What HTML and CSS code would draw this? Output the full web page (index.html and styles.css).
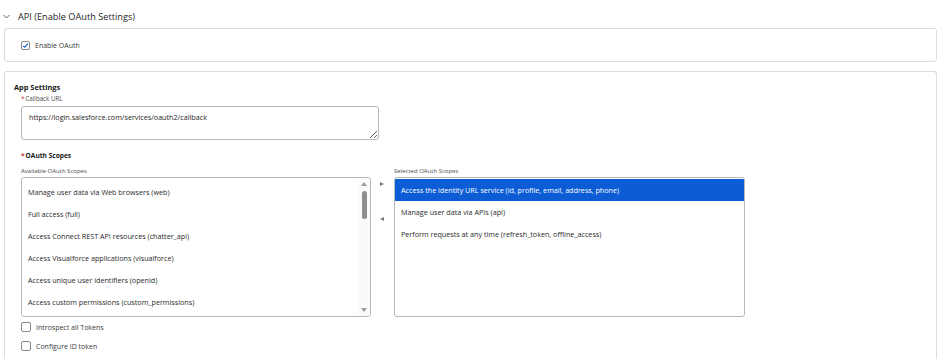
FILE: index.html
```html
<!DOCTYPE html>
<html lang="en">
<head>
    <meta charset="UTF-8">
    <title>API (Enable OAuth Settings)</title>
    <link rel="stylesheet" href="styles.css">
</head>
<body>
    <div class="section-header">
        <svg class="chevron" width="7" height="5" viewBox="0 0 7 5"><path d="M0.5 1 L3.5 4 L6.5 1" fill="none" stroke="#555" stroke-width="0.9"/></svg>
        <span>API (Enable OAuth Settings)</span>
    </div>

    <div class="card card-oauth">
        <label class="check">
            <span class="box checked">
                <svg width="7" height="7" viewBox="0 0 7 7"><path d="M1.2 3.8 L2.8 5.2 L5.8 1.6" fill="none" stroke="#0b5cd5" stroke-width="1.1"/></svg>
            </span>
            Enable OAuth
        </label>
    </div>

    <div class="card card-app">
        <h3>App Settings</h3>
        <div class="field-label"><span class="req">*</span>Callback URL</div>
        <textarea class="callback">https://login.salesforce.com/services/oauth2/callback</textarea>

        <h4><span class="req">*</span>OAuth Scopes</h4>
        <div class="dual">
            <div class="list-col">
                <div class="list-label">Available OAuth Scopes</div>
                <div class="listbox">
                    <ul class="options">
                        <li>Manage user data via Web browsers (web)</li>
                        <li>Full access (full)</li>
                        <li>Access Connect REST API resources (chatter_api)</li>
                        <li>Access Visualforce applications (visualforce)</li>
                        <li>Access unique user identifiers (openid)</li>
                        <li>Access custom permissions (custom_permissions)</li>
                    </ul>
                    <div class="scrollbar">
                        <span class="tri up"></span>
                        <span class="thumb"></span>
                        <span class="tri down"></span>
                    </div>
                </div>
            </div>
            <div class="movers">
                <span class="tri right"></span>
                <span class="tri left"></span>
            </div>
            <div class="list-col right-col">
                <div class="list-label">Selected OAuth Scopes</div>
                <div class="listbox">
                    <ul class="options">
                        <li class="selected">Access the identity URL service (id, profile, email, address, phone)</li>
                        <li>Manage user data via APIs (api)</li>
                        <li>Perform requests at any time (refresh_token, offline_access)</li>
                    </ul>
                </div>
            </div>
        </div>

        <label class="check row">
            <span class="box"></span>
            Introspect all Tokens
        </label>
        <label class="check row">
            <span class="box"></span>
            Configure ID token
        </label>
    </div>
</body>
</html>
```

FILE: styles.css
```css
* {
    margin: 0;
    padding: 0;
    box-sizing: border-box;
    font-family: "Open Sans", "Noto Sans", sans-serif;
}
body {
    width: 940px;
    height: 359px;
    overflow: hidden;
    background: #fff;
    color: #2b2b2b;
}
.section-header {
    height: 28px;
    display: flex;
    align-items: center;
    padding: 4px 0 0 3px;
    font-size: 9.2px;
    color: #1e1e1e;
}
.chevron {
    margin-right: 8px;
}
.card {
    margin: 0 3px 0 4px;
    border: 1px solid #dcdcdc;
    border-radius: 3px;
}
.card-oauth {
    height: 34px;
    display: flex;
    align-items: center;
    padding-left: 16px;
}
.check {
    display: flex;
    align-items: center;
    font-size: 7px;
    color: #3a3a3a;
}
.box {
    width: 9px;
    height: 9px;
    border: 1px solid #8a8a8a;
    border-radius: 2px;
    margin-right: 5px;
    display: flex;
    align-items: center;
    justify-content: center;
    background: #fff;
}
.card-app {
    margin-top: 9px;
    height: 288px;
    border-bottom: none;
    border-radius: 3px 3px 0 0;
    padding: 9px 0 0 16px;
}
.card-app h3 {
    margin-left: -7px;
    font-size: 7.4px;
    font-weight: 700;
    line-height: 12px;
    color: #181818;
}
.req {
    color: #c23934;
    margin-right: 1px;
}
.field-label {
    margin-top: 1px;
    font-size: 6.2px;
    line-height: 10px;
    color: #4a4a4a;
}
.callback {
    display: block;
    margin-top: 2px;
    width: 358px;
    height: 34px;
    border: 1px solid #b8b8b8;
    border-radius: 3px;
    padding: 5px 7px;
    font-size: 7.2px;
    color: #1e1e1e;
    resize: vertical;
    outline: none;
}
.card-app h4 {
    margin-top: 10px;
    font-size: 6.6px;
    font-weight: 700;
    line-height: 12px;
    color: #181818;
}
.dual {
    display: flex;
    margin-top: 4px;
}
.list-label {
    font-size: 6px;
    line-height: 10px;
    color: #4a4a4a;
    margin-bottom: 1px;
}
.list-col {
    width: 350px;
}
.right-col {
    width: 351px;
}
.listbox {
    position: relative;
    height: 140px;
    border: 1px solid #b8b8b8;
    border-radius: 3px;
    padding-top: 1px;
    overflow: hidden;
}
.options {
    list-style: none;
}
.options li {
    height: 22px;
    line-height: 23px;
    padding-left: 6px;
    font-size: 7.2px;
    color: #2b2b2b;
    white-space: nowrap;
}
.listbox .options li:first-child {
    margin-top: 2px;
}
.right-col .options li:first-child {
    margin-top: 0;
}
.options li.selected {
    background: #0b5cd5;
    color: #fff;
}
.scrollbar {
    position: absolute;
    top: 0;
    right: 0;
    bottom: 0;
    width: 11px;
    background: #fafafa;
}
.thumb {
    position: absolute;
    left: 3px;
    top: 13px;
    width: 5px;
    height: 28px;
    border-radius: 3px;
    background: #8e8e8e;
}
.tri {
    position: absolute;
    width: 0;
    height: 0;
    border-style: solid;
}
.tri.up {
    left: 2px;
    top: 4px;
    border-width: 0 3.5px 4px 3.5px;
    border-color: transparent transparent #9a9a9a transparent;
}
.tri.down {
    left: 2px;
    bottom: 4px;
    border-width: 4px 3.5px 0 3.5px;
    border-color: #9a9a9a transparent transparent transparent;
}
.movers {
    position: relative;
    width: 23px;
}
.tri.right {
    left: 9px;
    top: 16px;
    border-width: 2.5px 0 2.5px 4px;
    border-color: transparent transparent transparent #777;
}
.tri.left {
    left: 9px;
    top: 51px;
    border-width: 2.5px 4px 2.5px 0;
    border-color: transparent #777 transparent transparent;
}
.check.row {
    height: 18px;
    margin-top: 1px;
}
.check.row .box {
    width: 10px;
    height: 10px;
}
```
